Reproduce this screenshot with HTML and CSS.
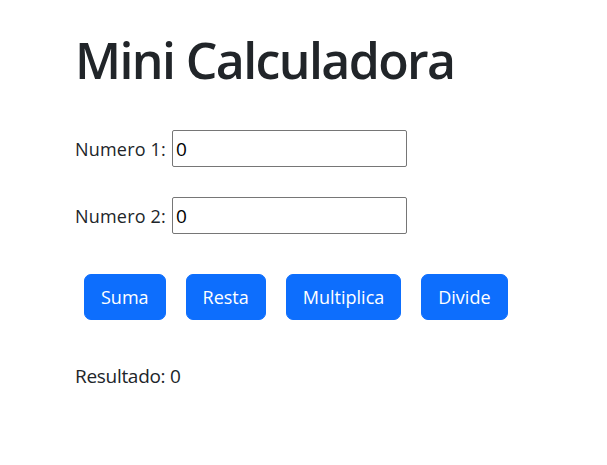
FILE: index.html
```html
<!DOCTYPE html>
<html lang="es">
<head>
<meta charset="utf-8">
<title>Mini Calculadora</title>
<link rel="stylesheet" href="styles.css">
</head>
<body>
<main class="container">
  <h1 class="title">Mini Calculadora</h1>
  <div class="field">
    <label class="label" for="n1">Numero 1:</label>
    <input class="input" id="n1" type="text" value="0">
  </div>
  <div class="field">
    <label class="label" for="n2">Numero 2:</label>
    <input class="input" id="n2" type="text" value="0">
  </div>
  <div class="buttons">
    <button class="btn">Suma</button>
    <button class="btn">Resta</button>
    <button class="btn">Multiplica</button>
    <button class="btn">Divide</button>
  </div>
  <p class="result">Resultado: 0</p>
</main>
</body>
</html>
```

FILE: styles.css
```css
html, body {
  margin: 0;
  padding: 0;
  background: #ffffff;
}
body {
  font-family: "Open Sans", "Noto Sans", sans-serif;
  color: #212529;
}
.container {
  padding: 29px 0 0 75px;
  display: flex;
  flex-direction: column;
  align-items: flex-start;
}
.title {
  margin: 0;
  font-size: 50px;
  line-height: 62px;
  font-weight: 600;
  letter-spacing: -1.6px;
  color: #212529;
}
.field {
  display: flex;
  align-items: center;
  gap: 6px;
  margin-top: 39px;
}
.field + .field {
  margin-top: 30px;
}
.label {
  font-size: 18px;
  letter-spacing: 0.2px;
}
.input {
  box-sizing: border-box;
  width: 235px;
  height: 37px;
  margin: 0;
  border: 1px solid #767676;
  border-radius: 2px;
  padding: 0 3px;
  font-family: "Open Sans", "Noto Sans", sans-serif;
  font-size: 19px;
  color: #000;
  background: #fff;
}
.buttons {
  display: flex;
  gap: 20px;
  margin: 40px 0 0 9px;
}
.btn {
  box-sizing: border-box;
  height: 46px;
  padding: 0 16px;
  border: 1px solid #0d6efd;
  border-radius: 7px;
  background: #0d6efd;
  color: #ffffff;
  font-family: "Open Sans", "Noto Sans", sans-serif;
  font-size: 18px;
  letter-spacing: 0;
}
.result {
  margin: 43px 0 0 0;
  font-size: 19px;
  letter-spacing: -0.3px;
}
```
